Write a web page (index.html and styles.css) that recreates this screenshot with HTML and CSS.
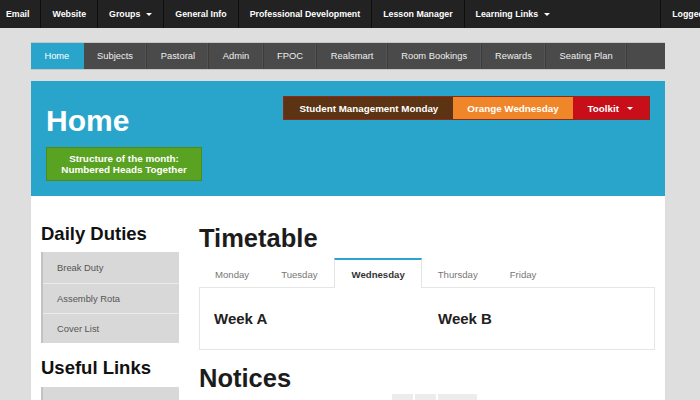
FILE: index.html
```html
<!DOCTYPE html>
<html>
<head>
<meta charset="utf-8">
<link rel="stylesheet" href="styles.css">
</head>
<body>
<div class="topbar">
  <a class="top-item first">Email</a>
  <a class="top-item">Website</a>
  <a class="top-item">Groups <span class="caret"></span></a>
  <a class="top-item">General Info</a>
  <a class="top-item">Professional Development</a>
  <a class="top-item">Lesson Manager</a>
  <a class="top-item">Learning Links <span class="caret"></span></a>
  <span class="top-spacer"></span>
  <a class="top-item user">Logged in as Teacher</a>
</div>

<div class="page">
  <nav class="mainnav">
    <a class="nav-item active">Home</a>
    <a class="nav-item">Subjects</a>
    <a class="nav-item">Pastoral</a>
    <a class="nav-item">Admin</a>
    <a class="nav-item">FPOC</a>
    <a class="nav-item">Realsmart</a>
    <a class="nav-item">Room Bookings</a>
    <a class="nav-item">Rewards</a>
    <a class="nav-item">Seating Plan</a>
  </nav>

  <header class="hero">
    <div class="hero-left">
      <h1 class="hero-title">Home</h1>
      <a class="structure-btn">Structure of the month:<br>Numbered Heads Together</a>
    </div>
    <div class="hero-actions">
      <a class="hbtn brown">Student Management Monday</a>
      <a class="hbtn orange">Orange Wednesday</a>
      <a class="hbtn red">Toolkit <span class="caret"></span></a>
    </div>
  </header>

  <main class="content">
    <aside class="sidebar">
      <h2 class="side-title">Daily Duties</h2>
      <ul class="side-list">
        <li>Break Duty</li>
        <li>Assembly Rota</li>
        <li>Cover List</li>
      </ul>
      <h2 class="side-title">Useful Links</h2>
      <ul class="side-list">
        <li>IT Support</li>
        <li>Staff Handbook</li>
      </ul>
    </aside>
    <section class="maincol">
      <h2 class="section-title">Timetable</h2>
      <div class="tabs">
        <span class="tab">Monday</span>
        <span class="tab">Tuesday</span>
        <span class="tab active">Wednesday</span>
        <span class="tab">Thursday</span>
        <span class="tab">Friday</span>
      </div>
      <div class="tab-panel">
        <div class="week">Week A</div>
        <div class="week">Week B</div>
      </div>
      <h2 class="section-title notices">Notices</h2>
      <div class="pager">
        <span class="pg"></span>
        <span class="pg"></span>
        <span class="pg wide"></span>
      </div>
    </section>
  </main>
</div>
</body>
</html>
```

FILE: styles.css
```css
* { box-sizing: border-box; }

html, body {
  margin: 0;
  padding: 0;
  background: #dedede;
  font-family: "Liberation Sans", Arial, sans-serif;
  overflow: hidden;
}

a { text-decoration: none; color: inherit; }

.topbar {
  display: flex;
  height: 28px;
  background: #222222;
  white-space: nowrap;
  overflow: hidden;
}

.top-item {
  display: flex;
  align-items: center;
  gap: 6px;
  padding: 0 11px;
  color: #ffffff;
  font-size: 8.8px;
  font-weight: bold;
  border-left: 1px solid #0e0e0e;
  flex-shrink: 0;
}

.top-item.first {
  border-left: none;
  padding-left: 6px;
}

.top-spacer { flex: 0 0 auto; width: 0; }

.top-item.user { margin-left: 99px; }

.caret {
  display: inline-block;
  width: 0;
  height: 0;
  border-left: 3px solid transparent;
  border-right: 3px solid transparent;
  border-top: 3px solid #ffffff;
}

.page {
  width: 634px;
  margin-left: 31px;
}

.mainnav {
  display: flex;
  margin-top: 14px;
  height: 28px;
  background: #4a4a4a;
  border-top: 1px solid #c6c6c6;
  border-bottom: 1px solid #c6c6c6;
}

.nav-item {
  display: flex;
  align-items: center;
  padding: 0 13.4px;
  color: #eeeeee;
  font-size: 9.35px;
  border-right: 1px solid #3c3c3c;
  box-shadow: inset -1px 0 0 #545454;
}

.nav-item.active {
  background: #29a5cb;
  color: #ffffff;
  border-right-color: #29a5cb;
  box-shadow: none;
}

.hero {
  display: flex;
  justify-content: space-between;
  align-items: flex-start;
  margin-top: 11px;
  height: 115px;
  padding: 15px;
  background: #29a5cb;
}

.hero-title {
  margin: 10px 0 11px 0;
  font-size: 30px;
  line-height: 30px;
  font-weight: bold;
  color: #ffffff;
}

.structure-btn {
  display: block;
  width: 156px;
  height: 34px;
  padding: 6px 4px;
  background: #5aa222;
  border: 1px solid #4b8a1b;
  color: #ffffff;
  font-size: 9.9px;
  font-weight: bold;
  line-height: 10.5px;
  text-align: center;
}

.hero-actions {
  display: flex;
  border: 1px solid #8e2a1c;
}

.hbtn {
  display: flex;
  align-items: center;
  gap: 8px;
  height: 22px;
  padding: 0 14px;
  color: #ffffff;
  font-size: 9.8px;
  font-weight: bold;
}

.hbtn.brown { background: #5c3414; padding: 0 15px 0 16px; }
.hbtn.orange { background: #f0862a; padding: 0 14px 0 14px; }
.hbtn.red { background: #c80f19; padding: 0 16px 0 15px; }

.content {
  display: flex;
  gap: 20px;
  background: #ffffff;
  padding: 28px 10px 0 10px;
  height: 220px;
}

.sidebar {
  width: 138px;
  flex-shrink: 0;
}

.side-title {
  margin: 0 0 8px 0;
  font-size: 18.5px;
  line-height: 1.1;
  font-weight: bold;
  color: #111111;
}

.side-list {
  list-style: none;
  margin: 0 0 15px 0;
  padding: 0;
  background: #d8d8d8;
  border-left: 2px solid #c2c2c2;
}

.side-list li {
  height: 30px;
  display: flex;
  align-items: center;
  padding-left: 14px;
  font-size: 9.4px;
  color: #555555;
  border-top: 1px solid #ececec;
}

.side-list li:first-child { border-top: none; height: 31px; }

.maincol {
  flex: 1;
}

.section-title {
  margin: 0 0 6px 0;
  font-size: 25.5px;
  line-height: 1.1;
  font-weight: bold;
  color: #1c1c1c;
}

.tabs {
  display: flex;
  position: relative;
  z-index: 1;
  margin-bottom: -1px;
}

.tab {
  display: flex;
  align-items: center;
  height: 30px;
  padding: 0 16px;
  border-top: 2px solid transparent;
  font-size: 9.6px;
  color: #777777;
}

.tab.active {
  background: #ffffff;
  padding: 0 16px 0 17px;
  border-top-color: #29a5cb;
  border-left: 1px solid #e4e4e4;
  border-right: 1px solid #e4e4e4;
  color: #333333;
  font-weight: bold;
}

.tab-panel {
  display: grid;
  grid-template-columns: 224px 1fr;
  padding: 22px 14px 21px 14px;
  border: 1px solid #e6e6e6;
}

.week {
  font-size: 15px;
  line-height: 18px;
  font-weight: bold;
  color: #222222;
}

.notices { margin-top: 14px; margin-bottom: 2px; }

.pager {
  display: flex;
  gap: 2px;
  padding-left: 193px;
}

.pg {
  width: 21px;
  height: 20px;
  background: #ececec;
}

.pg.wide { width: 39px; }
```
